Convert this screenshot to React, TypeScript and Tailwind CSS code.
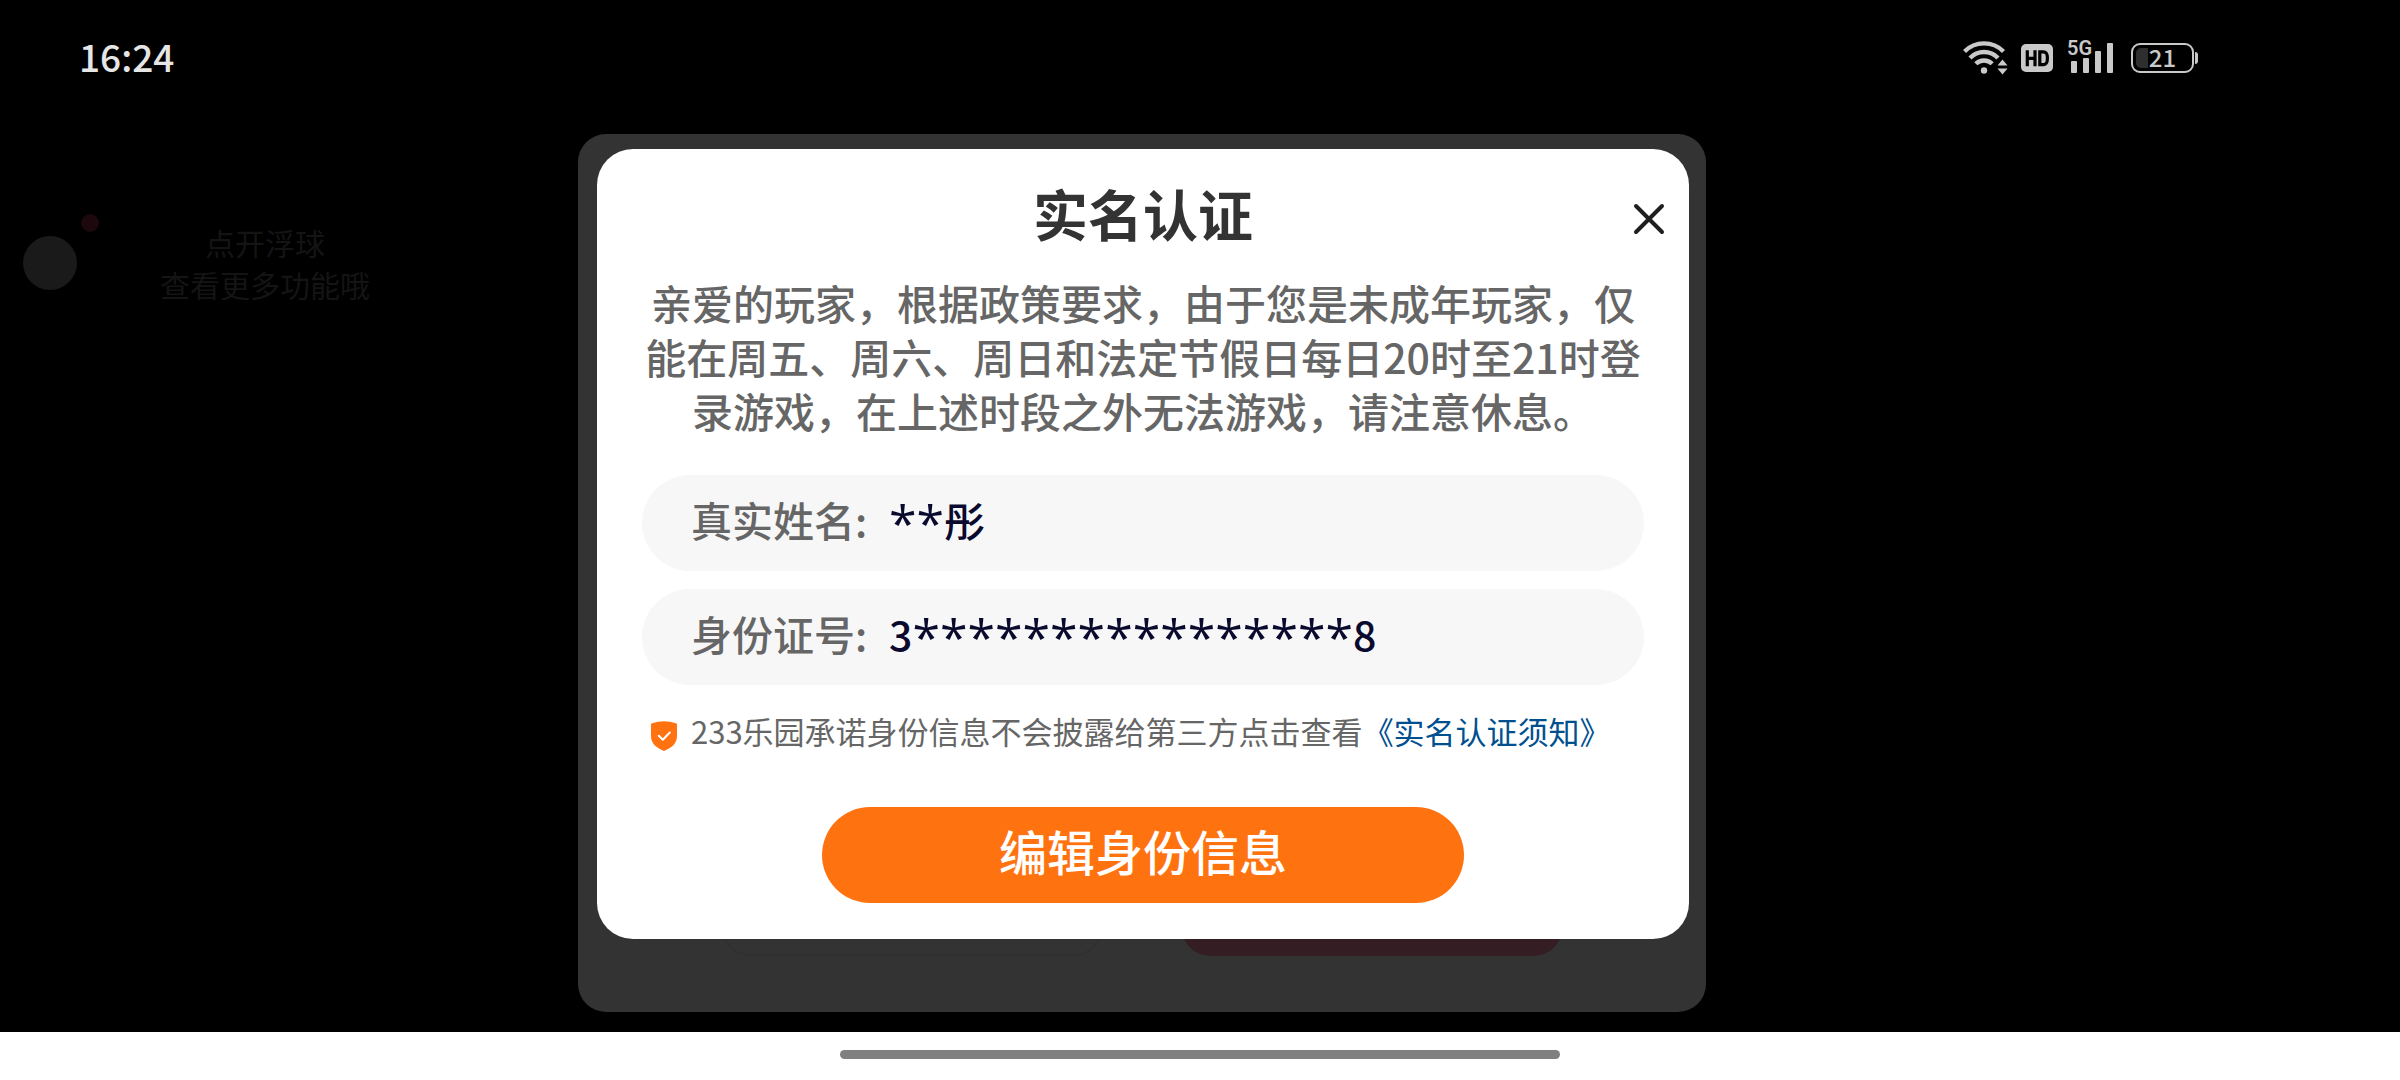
import type { ReactNode } from 'react';

function WifiIcon() {
  return (
    <svg viewBox="0 0 46 36" className="h-9 w-[46px]" fill="none" aria-label="Wi-Fi" role="img">
      <g stroke="#c9c9c9" strokeWidth="4.4">
        <path d="M1.5 11.5A27.5 27.5 0 0 1 40.5 11.5" />
        <path d="M7 18A19.5 19.5 0 0 1 35 18" />
        <path d="M12.800 23.800A11.700 11.700 0 0 1 29.200 23.800" />
      </g>
      <circle cx="21" cy="30.500" r="3.200" fill="#c9c9c9" />
      <path d="M39.500 19.500l5 6h-10zM39.500 34.500l5-6h-10z" fill="#c9c9c9" />
    </svg>
  );
}

function HdIcon() {
  return (
    <svg viewBox="0 0 32 28" className="h-7 w-8" role="img" aria-label="HD">
      <rect width="32" height="28" rx="5" fill="#c9c9c9" />
      <g fill="none" stroke="#000" strokeWidth="3.200">
        <path d="M6.300 6.300v16M14 6.300v16M6.300 14.300H14" />
        <path d="M18.800 7.900h3.400c3.200 0 4.200 1.800 4.200 6.400s-1 6.400-4.200 6.400h-3.400z" />
      </g>
    </svg>
  );
}

function SignalIcon() {
  return (
    <div className="relative h-8 w-12">
      <svg viewBox="0 0 48 32" className="h-8 w-12" fill="#c9c9c9" role="img" aria-label="信号">
        <rect x="4" y="19" width="6" height="12" rx="1" />
        <rect x="16" y="16" width="6" height="15" rx="1" />
        <rect x="28" y="9" width="6" height="22" rx="1" />
        <rect x="40" y="1" width="6" height="30" rx="1" />
      </svg>
      <span className="absolute -top-1 left-0 font-['Roboto'] text-[20px] leading-5 font-semibold text-[#c9c9c9]">5G</span>
    </div>
  );
}

function Battery() {
  return (
    <div className="flex items-center gap-px" role="img" aria-label="电量 21%">
      <div className="relative flex h-[30px] w-[63px] items-center justify-center rounded-[9px] border-2 border-[#c9c9c9]">
        <span className="absolute top-[3px] left-[3px] h-5 w-3 rounded-l-[5px] bg-[#2e2e2e]" />
        <span className="relative pb-0.5 text-[24px] leading-6 font-medium text-[#c9c9c9]">21</span>
      </div>
      <span className="h-3 w-[3px] rounded-r bg-[#c9c9c9]" />
    </div>
  );
}

function ShieldIcon() {
  return (
    <svg viewBox="0 0 26 30" className="mt-2.5 h-[30px] w-[26px] shrink-0" aria-hidden="true">
      <path d="M0 3.500Q0 2.600 1 2.300Q7 .2 13 .2T25 2.300Q26 2.600 26 3.500V15C26 23 20 27 13 30C6 27 0 23 0 15z" fill="#ff7210" />
      <path d="M7.800 14.800l4 4 7-7.300" fill="none" stroke="#fff" strokeWidth="2" strokeLinecap="round" strokeLinejoin="round" />
    </svg>
  );
}

function Stars({ count }: { count: number }) {
  return <span className="pt-2 font-['Open_Sans'] text-[50px] leading-none font-normal">{'*'.repeat(count)}</span>;
}

function Field({ label, children }: { label: string; children: ReactNode }) {
  return (
    <div className="flex h-24 items-center rounded-full bg-[#f7f7f8] px-[49px] pb-2 text-[41px] leading-none">
      <dt className="w-[198px] font-medium text-[#666]">{label}:</dt>
      <dd className="flex items-center font-medium text-[#0a0a2e]">{children}</dd>
    </div>
  );
}

export default function App() {
  return (
    <div className="flex min-h-screen flex-col bg-black font-['Noto_Sans_CJK_SC',sans-serif]">
      <header className="flex h-[116px] items-center justify-between pr-[202px] pl-[79px]">
        <time className="pb-1 text-[37px] leading-none font-medium text-[#e6e6e6]">16:24</time>
        <div className="flex items-center gap-3">
          <WifiIcon />
          <HdIcon />
          <div className="pr-1 pl-0.5">
            <SignalIcon />
          </div>
          <Battery />
        </div>
      </header>

      <main className="relative flex flex-1 justify-center pt-[18px] pr-[116px] pb-5">
        <aside className="absolute top-[105px] left-[23px] flex items-center gap-[83px] text-[#141414]">
          <div className="relative size-[54px] rounded-full bg-[#1a1a1a]">
            <span className="absolute -top-[22px] left-[58px] size-[18px] rounded-full bg-[#1c080d]" />
          </div>
          <p className="text-center text-[30px] leading-[42px]">
            点开浮球
            <br />
            查看更多功能哦
          </p>
        </aside>

        <div className="flex w-full max-w-[1128px] flex-col rounded-[28px] bg-[#333] pt-[15px] pb-14">
          <section
            role="dialog"
            aria-labelledby="dialog-title"
            className="relative z-10 mr-[17px] ml-[19px] flex flex-1 flex-col rounded-[36px] bg-white px-[45px] pb-9"
          >
            <h1 id="dialog-title" className="pt-[35px] text-center text-[55px] leading-[56px] font-bold text-[#333]">
              实名认证
            </h1>
            <button type="button" aria-label="关闭" className="absolute top-[50px] right-5 p-1 text-[#1f1f1f]">
              <svg viewBox="0 0 32 32" className="size-8" fill="none" stroke="currentColor" strokeWidth="4" strokeLinecap="round">
                <path d="M3 3l26 26M29 3L3 29" />
              </svg>
            </button>
            <p className="mt-[35px] text-center text-[41px] leading-[54px] font-medium text-[#666]">
              亲爱的玩家，根据政策要求，由于您是未成年玩家，仅能在周五、周六、周日和法定节假日每日20时至21时登录游戏，在上述时段之外无法游戏，请注意休息。
            </p>
            <dl className="mt-[38px] flex flex-col gap-[18px]">
              <Field label="真实姓名">
                <Stars count={2} />彤
              </Field>
              <Field label="身份证号">
                3<Stars count={16} />8
              </Field>
            </dl>
            <div className="mt-[26px] flex items-start gap-3.5 pl-[9px] text-[31px] leading-10 text-[#666]">
              <ShieldIcon />
              <p className="whitespace-nowrap">
                233乐园承诺身份信息不会披露给第三方点击查看
                <a href="#notice" className="text-[#00508f]">
                  《实名认证须知》
                </a>
              </p>
            </div>
            <button
              type="button"
              className="mx-auto mt-14 h-24 w-full max-w-[642px] rounded-full bg-[#ff7210] pb-2.5 text-[48px] leading-none font-medium text-white"
            >
              编辑身份信息
            </button>
          </section>
          <div className="-mt-10 flex justify-between px-36" aria-hidden="true">
            <div className="h-[57px] w-[380px] rounded-b-[28px] border-2 border-[#303030]" />
            <div className="h-[57px] w-[380px] rounded-b-[28px] bg-[#341d23]" />
          </div>
        </div>
      </main>

      <footer className="flex h-12 justify-center bg-white pt-[18px]">
        <div className="h-[9px] w-[720px] rounded-full bg-[#808080]" />
      </footer>
    </div>
  );
}
